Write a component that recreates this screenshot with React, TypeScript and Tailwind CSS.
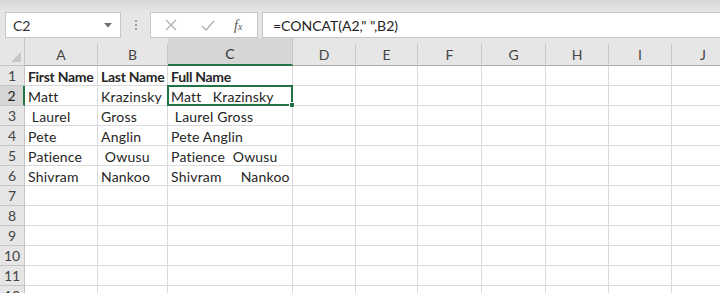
import clsx from "clsx"

const cols = ["A", "B", "C", "D", "E", "F", "G", "H", "I", "J"]

// leading / repeated spaces are part of the data
const data: string[][] = [
  ["First Name", "Last Name", "Full Name"],
  ["Matt", "Krazinsky", "Matt   Krazinsky"],
  [" Laurel", "Gross", " Laurel Gross"],
  ["Pete", "Anglin", "Pete Anglin"],
  ["Patience", " Owusu", "Patience  Owusu"],
  ["Shivram", "Nankoo", "Shivram     Nankoo"],
]

const font = { fontFamily: "Lato, 'Open Sans', sans-serif" }

const FormulaBar = () => (
  <div className="bg-[#e6e6e6]">
    <div className="h-[12px] bg-gradient-to-b from-[#d6d6d6] to-[#e6e6e6]" />
    <div className="flex h-[26px] items-stretch">
      <div className="ml-[5px] flex w-[116px] items-center justify-between border border-[#c6c6c6] bg-white pl-[7px] pr-[8px] text-[14px] text-[#333]">
        <span>C2</span>
        <svg width="8" height="5" viewBox="0 0 8 5">
          <path d="M0 0h8L4 4.5z" fill="#707070" />
        </svg>
      </div>
      <div className="flex w-[29px] flex-col items-center justify-center gap-[2px]">
        <div className="h-[2px] w-[2px] bg-[#a0a0a0]" />
        <div className="h-[2px] w-[2px] bg-[#a0a0a0]" />
        <div className="h-[2px] w-[2px] bg-[#a0a0a0]" />
      </div>
      <div className="flex w-[108px] items-center border border-[#c6c6c6] bg-white">
        <svg className="ml-[14px]" width="12" height="12" viewBox="0 0 12 12">
          <path d="M1 1l10 10M11 1L1 11" stroke="#b0b0b0" strokeWidth="1.3" />
        </svg>
        <svg className="ml-[24px]" width="14" height="11" viewBox="0 0 14 11">
          <path d="M1 6l4 4L13 1" stroke="#b0b0b0" strokeWidth="1.4" fill="none" />
        </svg>
        <span
          className="ml-[19px] text-[14px] italic text-[#555]"
          style={{ fontFamily: "'Liberation Serif', serif" }}
        >
          f<span className="text-[10px]">x</span>
        </span>
      </div>
      <div className="ml-[4px] flex flex-1 items-center border border-r-0 border-[#c6c6c6] bg-white pl-[10px] text-[14px] text-[#222] whitespace-pre">
        =CONCAT(A2," ",B2)
      </div>
    </div>
  </div>
)

export default function App() {
  return (
    <div className="h-[293px] w-[720px] overflow-hidden bg-white" style={font}>
      <FormulaBar />
      <div className="grid grid-cols-[25px_73px_70px_125px_63px_62px_64px_64px_63px_63px_63px_1fr] bg-white">
        {/* header row */}
        <div className="relative h-[28px] border-b border-r border-[#c4c4c4] bg-[#e6e6e6]">
          <svg className="absolute bottom-[3px] right-[3px]" width="10" height="10" viewBox="0 0 10 10">
            <path d="M10 0v10H0z" fill="#c6c6c6" />
          </svg>
        </div>
        {cols.map((c) => (
          <div
            key={c}
            className={clsx(
              "flex h-[28px] items-end justify-center pb-[1px] text-[14px]",
              c === "C"
                ? "border-b-2 border-r border-b-[#217346] border-r-[#c4c4c4] bg-[#d6d6d6] text-[#333]"
                : "border-b border-[#ababab] bg-[#e6e6e6] text-[#444]",
            )}
          >
            <div className={clsx("flex h-[20px] w-full items-center justify-center", c !== "C" && "border-r border-[#c8c8c8]")}>
              {c}
            </div>
          </div>
        ))}
        <div className="h-[28px] border-b border-[#ababab] bg-[#e6e6e6]" />

        {Array.from({ length: 12 }).map((_, r) => (
          <Row key={r} n={r + 1} row={data[r] ?? []} />
        ))}
      </div>
    </div>
  )
}

const Row: React.FC<{ n: number; row: string[] }> = ({ n, row }) => {
  return (
    <>
      <div
        className={clsx(
          "flex h-[20px] items-center justify-center border-b text-[14px]",
          n === 2
            ? "border-r-2 border-b-[#c4c4c4] border-r-[#217346] bg-[#d6d6d6] text-[#222]"
            : "border-r border-[#c4c4c4] bg-[#e6e6e6] text-[#444]",
        )}
      >
        {n}
      </div>
      {cols.map((c, i) => {
        const sel = n === 2 && c === "C"
        return (
          <div
            key={c}
            className={clsx(
              "relative flex h-[20px] items-center whitespace-pre border-b border-r border-[#dadada] pl-[3px] pt-[1px] text-[14px] text-[#262626]",
              n === 1 ? "font-bold tracking-[-0.3px]" : "tracking-[0.2px]",
            )}
          >
            {row[i] ?? ""}
            {sel && (
              <div className="absolute -left-px -top-px z-10 h-[21px] w-[126px] border-2 border-[#217346]">
                <div className="absolute -bottom-[4px] -right-[4px] h-[6px] w-[6px] border border-white bg-[#217346]" />
              </div>
            )}
          </div>
        )
      })}
      <div className="h-[20px] border-b border-[#dadada]" />
    </>
  )
}
